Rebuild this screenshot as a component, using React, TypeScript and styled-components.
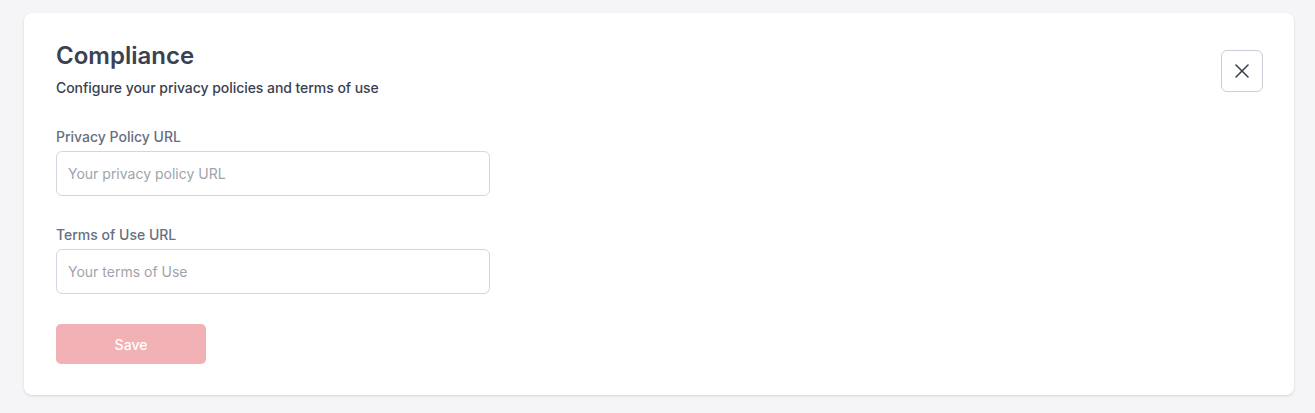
import React from "react";
import styled, { createGlobalStyle } from "styled-components";

const Global = createGlobalStyle`
  html, body { margin: 0; padding: 0; background: #f5f5f8; }
  body { font-family: Inter, "Noto Sans", sans-serif; -webkit-font-smoothing: antialiased; }
  * { box-sizing: border-box; }
`;

const Page = styled.div`
  padding: 13px 21px 18px 24px;
`;

const Card = styled.section`
  background: #ffffff;
  border-radius: 8px;
  box-shadow: 0 1px 3px rgba(16, 24, 40, 0.1), 0 1px 2px rgba(16, 24, 40, 0.04);
  padding: 28px 31px 31px 32px;
`;

const Header = styled.div`
  display: flex;
  justify-content: space-between;
  align-items: flex-start;
`;

const TitleBlock = styled.div`
  display: flex;
  flex-direction: column;
`;

const Title = styled.h1`
  margin: 0;
  font-size: 24px;
  line-height: 30px;
  font-weight: 600;
  color: #3a4150;
`;

const Subtitle = styled.p`
  margin: 7px 0 0;
  font-size: 14px;
  line-height: 20px;
  font-weight: 500;
  letter-spacing: -0.05px;
  color: #3a4150;
`;

const CloseButton = styled.button`
  margin-top: 9px;
  width: 42px;
  height: 42px;
  border: 1px solid #cbcdd8;
  border-radius: 6px;
  background: #fff;
  display: flex;
  align-items: center;
  justify-content: center;
  padding: 0;
  color: #3a4150;
  cursor: pointer;
`;

const Form = styled.div`
  display: flex;
  flex-direction: column;
  width: 434px;
`;

const Field = styled.label`
  display: flex;
  flex-direction: column;
  gap: 4px;
  margin-top: 29px;
`;

const Label = styled.span`
  font-size: 14px;
  line-height: 20px;
  font-weight: 500;
  color: #676f80;
`;

const Input = styled.input`
  height: 45px;
  width: 100%;
  border: 1px solid #d3d7df;
  border-radius: 6px;
  padding: 0 11px;
  font-family: Inter, "Noto Sans", sans-serif;
  font-size: 14px;
  color: #3a4150;
  outline: none;
  &::placeholder { color: #a1a3ab; }
`;

const SaveButton = styled.button`
  margin-top: 30px;
  width: 150px;
  height: 40px;
  border: none;
  border-radius: 5px;
  background: #f2b1b4;
  color: #ffffff;
  font-family: Inter, "Noto Sans", sans-serif;
  font-size: 14px;
  font-weight: 500;
`;

export default function App() {
  return (
    <>
      <Global />
      <Page>
        <Card>
          <Header>
            <TitleBlock>
              <Title>Compliance</Title>
              <Subtitle>Configure your privacy policies and terms of use</Subtitle>
            </TitleBlock>
            <CloseButton aria-label="Close">
              <svg width="24" height="24" viewBox="0 0 24 24" fill="none" stroke="currentColor" strokeWidth="1.6" strokeLinecap="round">
                <path d="M18 6 6 18" />
                <path d="m6 6 12 12" />
              </svg>
            </CloseButton>
          </Header>
          <Form>
            <Field>
              <Label>Privacy Policy URL</Label>
              <Input placeholder="Your privacy policy URL" />
            </Field>
            <Field>
              <Label>Terms of Use URL</Label>
              <Input placeholder="Your terms of Use" />
            </Field>
            <SaveButton disabled>Save</SaveButton>
          </Form>
        </Card>
      </Page>
    </>
  );
}
